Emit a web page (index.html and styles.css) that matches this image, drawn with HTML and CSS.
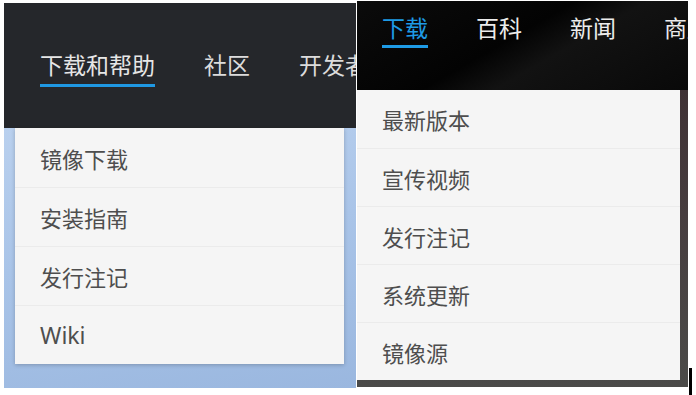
FILE: index.html
```html
<!DOCTYPE html>
<html>
<head>
    <title>下载菜单</title>
    <link rel="stylesheet" href="styles.css">
</head>
<body>
    <div class="shots">
        <div class="panel panel-left">
            <div class="header header-left">
                <nav class="nav">
                    <span class="nav-item active">下载和帮助</span>
                    <span class="nav-item">社区</span>
                    <span class="nav-item">开发者</span>
                </nav>
            </div>
            <div class="stage">
                <ul class="menu menu-left">
                    <li>镜像下载</li>
                    <li>安装指南</li>
                    <li>发行注记</li>
                    <li class="latin">Wiki</li>
                </ul>
            </div>
        </div>

        <div class="panel panel-right">
            <div class="header header-right">
                <nav class="nav">
                    <span class="nav-item active">下载</span>
                    <span class="nav-item">百科</span>
                    <span class="nav-item">新闻</span>
                    <span class="nav-item">商店</span>
                </nav>
            </div>
            <div class="stage-dark">
                <ul class="menu menu-right">
                    <li>最新版本</li>
                    <li>宣传视频</li>
                    <li>发行注记</li>
                    <li>系统更新</li>
                    <li>镜像源</li>
                </ul>
            </div>
        </div>

        <div class="caret"></div>
    </div>
</body>
</html>
```

FILE: styles.css
```css
html, body {
    margin: 0;
    padding: 0;
    background: #fff;
}
body {
    width: 696px;
    height: 395px;
    overflow: hidden;
    font-family: "Noto Sans CJK SC", "Noto Sans", sans-serif;
}
.shots {
    display: flex;
    align-items: flex-start;
    height: 395px;
}
.panel {
    overflow: hidden;
    display: flex;
    flex-direction: column;
}
.panel-left {
    width: 352px;
    height: 385px;
    margin: 3px 0 0 4px;
}
.panel-right {
    width: 331px;
    height: 386px;
    margin: 1px 0 0 1px;
    background: linear-gradient(180deg, #3a2a2e 0%, #463d3f 55%, #4b4b49 100%);
}

/* headers */
.header {
    flex: none;
    overflow: hidden;
}
.header-left {
    height: 125px;
    background: #25272b;
    padding: 46px 0 0 36px;
    box-sizing: border-box;
}
.header-right {
    height: 89px;
    background: linear-gradient(150deg, #0b0b0b 0%, #030303 45%, #121212 60%, #090909 100%);
    padding: 11px 0 0 25px;
    box-sizing: border-box;
}
.nav {
    display: flex;
    white-space: nowrap;
}
.nav-item {
    font-size: 23px;
    line-height: 30px;
    color: #dcdcdc;
    border-bottom: 3px solid transparent;
}
.header-left .nav {
    gap: 49px;
}
.header-left .nav-item {
    padding-bottom: 5px;
}
.header-left .nav-item.active {
    border-bottom-color: #1f98e3;
    color: #e6e6e6;
}
.header-right .nav {
    gap: 48px;
}
.header-right .nav-item {
    padding-bottom: 3px;
    color: #ececec;
}
.header-right .nav-item.active {
    color: #1e9be6;
    border-bottom-color: #1e9be6;
}

/* page behind the menus */
.stage {
    flex: 1;
    background: linear-gradient(170deg, #b9d0ee 0%, #a9c4e8 45%, #9ab7df 100%);
    padding: 0 12px 0 11px;
}
.stage-dark {
    flex: 1;
    padding: 0 8px 0 0;
}

/* menus */
.menu {
    list-style: none;
    margin: 0;
    padding: 0;
    background: #f5f5f5;
}
.menu li {
    font-size: 22px;
    color: #4e4e4e;
    border-top: 1px solid #ebebeb;
    display: flex;
    align-items: center;
}
.menu li:first-child {
    border-top: none;
}
.menu-left {
    box-shadow: 0 1px 4px rgba(0, 0, 0, 0.22);
}
.menu-left li {
    height: 58px;
    padding-left: 25px;
}
.menu-left li:first-child {
    height: 59px;
}
.menu .latin {
    font-family: "Noto Sans", sans-serif;
    font-size: 23px;
}
.menu-right li {
    height: 57px;
    padding-left: 25px;
}
.menu-right li:first-child {
    height: 58px;
}

.caret {
    width: 3px;
    height: 27px;
    background: #000;
    margin: 368px 0 0 1px;
}
```
